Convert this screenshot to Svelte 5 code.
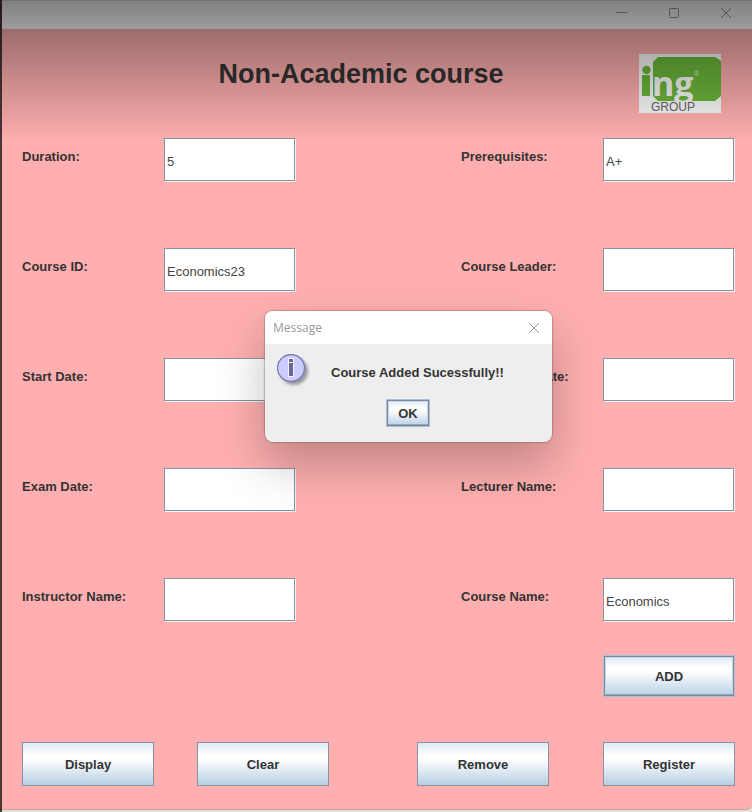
<script>
  let fields = $state([
    { id: 'duration', label: 'Duration:', value: '5' },
    { id: 'prerequisites', label: 'Prerequisites:', value: 'A+' },
    { id: 'course-id', label: 'Course ID:', value: 'Economics23' },
    { id: 'course-leader', label: 'Course Leader:', value: '' },
    { id: 'start-date', label: 'Start Date:', value: '' },
    { id: 'completion-date', label: 'Completion Date:', value: '' },
    { id: 'exam-date', label: 'Exam Date:', value: '' },
    { id: 'lecturer-name', label: 'Lecturer Name:', value: '' },
    { id: 'instructor-name', label: 'Instructor Name:', value: '' },
    { id: 'course-name', label: 'Course Name:', value: 'Economics' }
  ]);
  const actions = ['Display', 'Clear', 'Remove', 'Register'];
</script>

<div class="desktop">
  <main class="window">
    <div class="titlebar">
      <button type="button" class="control" aria-label="Minimize">
        <svg width="12" height="12" viewBox="0 0 12 12"><path d="M0.5 5.5H11.5" /></svg>
      </button>
      <button type="button" class="control" aria-label="Maximize">
        <svg width="12" height="12" viewBox="0 0 12 12"><rect x="1.5" y="1.5" width="9" height="9" rx="1" /></svg>
      </button>
      <button type="button" class="control" aria-label="Close">
        <svg width="12" height="12" viewBox="0 0 12 12"><path d="M1 1L11 11M11 1L1 11" /></svg>
      </button>
    </div>

    <header>
      <h1>Non-Academic course</h1>
      <svg class="logo" width="82" height="59" viewBox="0 0 82 59" role="img" aria-label="ing group">
        <rect width="82" height="59" fill="#fafafa" />
        <path d="M19 3H76L82 7V42L76 47H19L14 42V8Z" fill="#6cb83a" />
        <circle cx="7.500" cy="16" r="4.200" fill="#6cb83a" />
        <rect x="3" y="21" width="8" height="21" fill="#6cb83a" />
        <text class="mark" x="13" y="42">ng</text>
        <text class="reg" x="55" y="22">®</text>
        <text class="group" x="12" y="57">GROUP</text>
      </svg>
    </header>

    <form onsubmit={(e) => e.preventDefault()}>
      <div class="fields">
        {#each fields as field (field.id)}
          <div class="field">
            <label for={field.id}>{field.label}</label>
            <input id={field.id} type="text" bind:value={field.value} />
          </div>
        {/each}
      </div>
      <div class="add-row">
        <button type="submit" class="metal focused">ADD</button>
      </div>
      <div class="actions">
        {#each actions as action}
          <button type="button" class="metal">{action}</button>
        {/each}
      </div>
    </form>
  </main>
  <div class="shade"></div>

  <div class="dialog" role="dialog" aria-labelledby="dialog-title">
    <div class="dialog-title">
      <span id="dialog-title">Message</span>
      <button type="button" class="control" aria-label="Close message">
        <svg width="12" height="12" viewBox="0 0 12 12"><path d="M1 1L11 11M11 1L1 11" /></svg>
      </button>
    </div>
    <div class="dialog-body">
      <svg class="info" width="36" height="36" viewBox="1 1 36 36">
        <defs>
          <filter id="soft" x="-30%" y="-30%" width="160%" height="160%"><feGaussianBlur stdDeviation="1.500" /></filter>
        </defs>
        <circle cx="18" cy="18" r="14" fill="#777" opacity="0.7" filter="url(#soft)" />
        <circle cx="15" cy="15" r="13.500" fill="#ccccff" stroke="#7a79b5" stroke-width="1.300" />
        <rect x="12" y="5" width="6" height="19" fill="#f4f4ff" />
        <rect x="13" y="6" width="4" height="3" fill="#666699" />
        <rect x="13" y="10" width="4" height="13" fill="#666699" />
      </svg>
      <p>Course Added Sucessfully!!</p>
      <button type="button" class="metal focused ok">OK</button>
    </div>
  </div>
</div>

<style>
  :global(body) {
    margin: 0;
    background: #e4dedb;
  }

  .desktop {
    position: relative;
    box-sizing: border-box;
    min-height: 100vh;
    padding: 1px 0 3px 2px;
    background: linear-gradient(90deg, #4a3539 2px, #e4dedb 2px);
    font-family: 'Liberation Sans', Arial, sans-serif;
    color: #333;
  }

  .window {
    background: #ffafaf;
    border-radius: 0 0 6px 0;
    box-shadow: 0 1px 0 #c8a1a1;
  }

  .titlebar {
    display: flex;
    justify-content: flex-end;
    gap: 40px;
    height: 28px;
    padding: 0 20px 0 0;
    background: #fff;
  }

  .control {
    display: flex;
    align-items: center;
    justify-content: center;
    width: 12px;
    padding: 0;
    border: 0;
    background: none;
  }

  .control svg {
    flex: none;
    fill: none;
    stroke: #999;
  }

  .titlebar .control svg {
    margin-bottom: 4px;
  }

  header {
    display: grid;
    grid-template-columns: 1fr auto;
    align-items: start;
    height: 109px;
    box-sizing: border-box;
    padding: 25px 31px 0 81px;
  }

  h1 {
    margin: 4px 0 0;
    font-size: 27px;
    line-height: 32px;
    text-align: center;
  }

  .logo .mark {
    font: bold 34px 'Open Sans', 'Noto Sans', sans-serif;
    fill: #fafafa;
  }

  .logo .reg {
    font: 7px 'Liberation Sans', Arial, sans-serif;
    fill: #e4f2da;
  }

  .logo .group {
    font: 12px 'Liberation Sans', Arial, sans-serif;
    fill: #666;
  }

  form {
    padding: 0 17px 23px 20px;
  }

  .fields {
    display: grid;
    grid-template-columns: auto auto;
    justify-content: space-between;
    row-gap: 66px;
  }

  .field {
    display: grid;
    grid-template-columns: 142px 132px;
    height: 44px;
  }

  label {
    padding-top: 10px;
    font-size: 13px;
    font-weight: bold;
    line-height: 17px;
    white-space: nowrap;
  }

  input {
    box-sizing: border-box;
    width: 131px;
    height: 43px;
    padding: 3px 2px 0;
    border: 1px solid #8594a3;
    border-radius: 0;
    outline: 0;
    box-shadow: 1px 1px 0 #f3f3f6;
    background: #fff;
    font: 13px 'Liberation Sans', Arial, sans-serif;
    color: #444;
  }

  .add-row {
    display: flex;
    justify-content: flex-end;
    padding: 33px 0 45px;
  }

  .actions {
    display: grid;
    grid-template-columns: 132px 43fr 132px 88fr 132px 54fr 132px;
  }

  .actions .metal:nth-child(2) {
    grid-column: 3;
  }

  .actions .metal:nth-child(3) {
    grid-column: 5;
  }

  .actions .metal:nth-child(4) {
    grid-column: 7;
  }

  .metal {
    box-sizing: border-box;
    width: 132px;
    height: 44px;
    padding: 0;
    border: 1px solid #8594a3;
    border-radius: 0;
    background: linear-gradient(#dde8f3, #fff 30%, #fff 38%, #b8cfe5);
    font: bold 13px 'Liberation Sans', Arial, sans-serif;
    color: #333;
  }

  .focused {
    height: 42px;
    border-color: #a9c0d4;
    box-shadow: inset 0 0 0 1px #7a8a99, inset 0 -2px 0 #8fa6bf, inset 0 0 0 2px #c6d8e9;
  }

  .shade {
    position: absolute;
    inset: 0 0 auto 0;
    height: 142px;
    background: linear-gradient(rgba(0, 0, 0, 0.5), rgba(0, 0, 0, 0.39) 20%, rgba(0, 0, 0, 0));
    pointer-events: none;
  }

  .dialog {
    position: absolute;
    top: 311px;
    left: 265px;
    width: 287px;
    border-radius: 8px;
    background: #eee;
    box-shadow: 0 0 1px 1px rgba(90, 60, 60, 0.3), 0 22px 48px rgba(0, 0, 0, 0.26);
  }

  .dialog-title {
    display: flex;
    justify-content: space-between;
    height: 33px;
    padding: 0 12px 0 8px;
    border-radius: 8px 8px 0 0;
    background: #fff;
    font: 12px/33px 'Open Sans', 'Noto Sans', sans-serif;
    color: #999;
  }

  .dialog-body {
    display: grid;
    grid-template-columns: 36px auto;
    justify-content: start;
    column-gap: 18px;
    padding: 10px 12px 15px;
  }

  .dialog-body p {
    margin: 10px 0 0;
    font-size: 13px;
    font-weight: bold;
    line-height: 17px;
  }

  .ok {
    grid-column: 1 / -1;
    justify-self: start;
    width: 44px;
    height: 28px;
    margin: 9px 0 0 109px;
  }
</style>
